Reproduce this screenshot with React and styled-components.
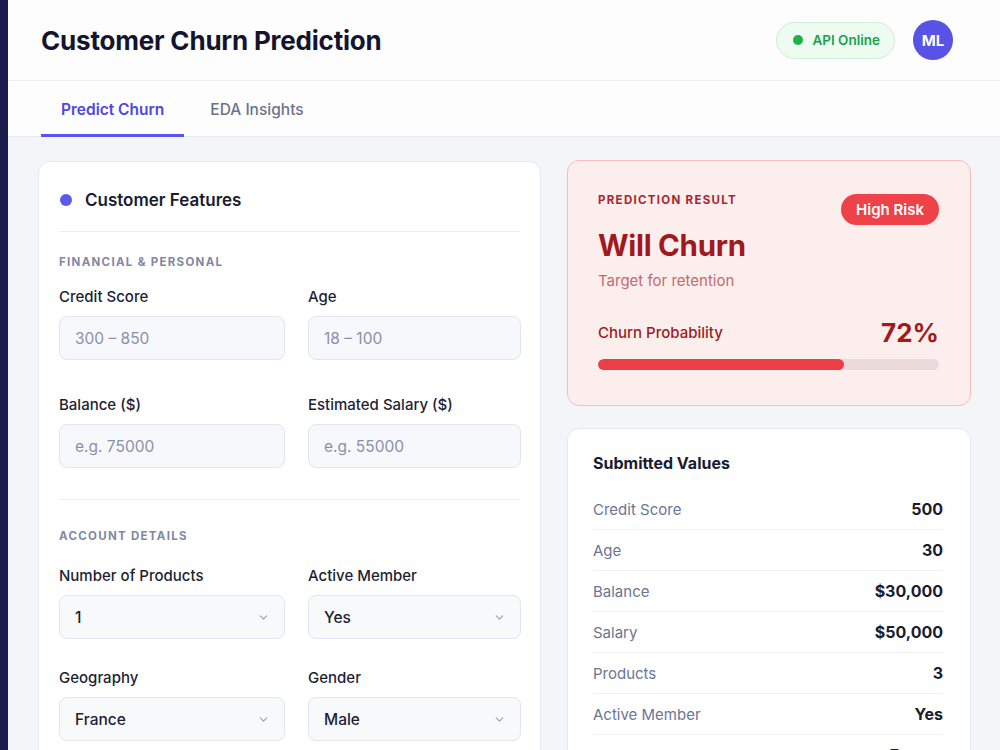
import React from "react"
import styled, { createGlobalStyle } from "styled-components"
import { ChevronDown } from "lucide-react"

const GlobalStyle = createGlobalStyle`
  * { box-sizing: border-box; }
  body {
    margin: 0;
    font-family: Inter, "Noto Sans", "Liberation Sans", sans-serif;
    background: #f4f5f9;
    color: #15172f;
  }
`

const submitted = [
  ["Credit Score", "500"],
  ["Age", "30"],
  ["Balance", "$30,000"],
  ["Salary", "$50,000"],
  ["Products", "3"],
  ["Active Member", "Yes"],
  ["Geography", "France"],
  ["Gender", "Male"],
]

const Field = ({ label, placeholder, value }) => (
  <FieldBox>
    <Label>{label}</Label>
    {value ? (
      <Select>
        <span>{value}</span>
        <ChevronDown size={13} strokeWidth={2} color="#9aa1b5" />
      </Select>
    ) : (
      <Input placeholder={placeholder} />
    )}
  </FieldBox>
)

const App = () => {
  const probability = 72

  return (
    <>
      <GlobalStyle />
      <Shell>
        <Sidebar />
        <Page>
          <Header>
            <Title>Customer Churn Prediction</Title>
            <HeaderRight>
              <StatusPill>
                <StatusDot />
                API Online
              </StatusPill>
              <Avatar>ML</Avatar>
            </HeaderRight>
          </Header>

          <Tabs>
            <Tab active>Predict Churn</Tab>
            <Tab>EDA Insights</Tab>
          </Tabs>

          <Main>
            <Card>
              <CardHeader>
                <HeaderDot />
                Customer Features
              </CardHeader>

              <Section>
                <SectionTitle>Financial &amp; Personal</SectionTitle>
                <FieldGrid rowGap={35}>
                  <Field label="Credit Score" placeholder="300 – 850" />
                  <Field label="Age" placeholder="18 – 100" />
                  <Field label="Balance ($)" placeholder="e.g. 75000" />
                  <Field label="Estimated Salary ($)" placeholder="e.g. 55000" />
                </FieldGrid>
              </Section>

              <Section divided>
                <SectionTitle spaced>Account Details</SectionTitle>
                <FieldGrid rowGap={29}>
                  <Field label="Number of Products" value="1" />
                  <Field label="Active Member" value="Yes" />
                  <Field label="Geography" value="France" />
                  <Field label="Gender" value="Male" />
                </FieldGrid>
              </Section>
            </Card>

            <Side>
              <ResultCard>
                <ResultTop>
                  <div>
                    <Eyebrow>Prediction Result</Eyebrow>
                    <Verdict>Will Churn</Verdict>
                    <Hint>Target for retention</Hint>
                  </div>
                  <RiskPill>High Risk</RiskPill>
                </ResultTop>
                <ProbRow>
                  <span>Churn Probability</span>
                  <ProbValue>{probability}%</ProbValue>
                </ProbRow>
                <Track>
                  <Fill style={{ width: `${probability}%` }} />
                </Track>
              </ResultCard>

              <ValuesCard>
                <ValuesTitle>Submitted Values</ValuesTitle>
                {submitted.map(([k, v]) => (
                  <ValueRow key={k}>
                    <span>{k}</span>
                    <strong>{v}</strong>
                  </ValueRow>
                ))}
              </ValuesCard>
            </Side>
          </Main>
        </Page>
      </Shell>
    </>
  )
}

export default App

const Shell = styled.div`
  display: flex;
  min-height: 100vh;
`

const Sidebar = styled.aside`
  width: 8px;
  flex-shrink: 0;
  background: #1c1b4d;
`

const Page = styled.div`
  flex: 1;
  min-width: 0;
`

const Header = styled.header`
  height: 81px;
  display: flex;
  align-items: center;
  justify-content: space-between;
  padding: 0 47px 0 33px;
  background: #fdfdfe;
  border-bottom: 1px solid #eceef3;
`

const Title = styled.h1`
  margin: 0;
  font-size: 26px;
  font-weight: 700;
  letter-spacing: -0.2px;
  color: #13152f;
`

const HeaderRight = styled.div`
  display: flex;
  align-items: center;
  gap: 18px;
`

const StatusPill = styled.div`
  display: flex;
  align-items: center;
  gap: 9px;
  height: 37px;
  padding: 0 14px 0 16px;
  border-radius: 19px;
  background: #edfbf1;
  border: 1px solid #ccefd8;
  color: #19a24a;
  font-size: 13.5px;
  font-weight: 600;
`

const StatusDot = styled.span`
  width: 10px;
  height: 10px;
  border-radius: 50%;
  background: #1fb04c;
`

const Avatar = styled.div`
  width: 40px;
  height: 40px;
  border-radius: 50%;
  background: #5853e6;
  color: #fff;
  display: flex;
  align-items: center;
  justify-content: center;
  font-size: 15px;
  font-weight: 700;
`

const Tabs = styled.nav`
  display: flex;
  gap: 6px;
  height: 56px;
  padding: 0 33px;
  background: #fdfdfe;
  border-bottom: 1px solid #e8eaf0;
`

const Tab = styled.div`
  display: flex;
  align-items: center;
  padding: 3px 20px 0;
  font-size: 15.5px;
  font-weight: ${(p) => (p.active ? 600 : 500)};
  color: ${(p) => (p.active ? "#4f46e5" : "#6b7389")};
  border-bottom: 3px solid ${(p) => (p.active ? "#5b55ef" : "transparent")};
  margin-bottom: -1px;
`

const Main = styled.main`
  display: grid;
  grid-template-columns: 503px 404px;
  gap: 26px;
  align-items: start;
  padding: 24px 0 40px 30px;
`

const Card = styled.section`
  background: #fff;
  border: 1px solid #e6e8ef;
  border-radius: 12px;
  padding: 0 20px 30px;
`

const CardHeader = styled.div`
  display: flex;
  align-items: center;
  gap: 13px;
  height: 70px;
  padding: 6px 0 0 1px;
  border-bottom: 1px solid #eceef3;
  font-size: 17px;
  font-weight: 600;
  color: #1a1c2e;
`

const HeaderDot = styled.span`
  width: 12px;
  height: 12px;
  border-radius: 50%;
  background: #5d58ea;
`

const Section = styled.div`
  padding: ${(p) => (p.divided ? "28px 0 0" : "22px 0 31px")};
  border-top: ${(p) => (p.divided ? "1px solid #eceef3" : "none")};
`

const SectionTitle = styled.div`
  font-size: 11.5px;
  line-height: 16px;
  font-weight: 700;
  letter-spacing: 1.3px;
  text-transform: uppercase;
  color: #7f88a4;
  margin-bottom: ${(p) => (p.spaced ? 22 : 17)}px;
`

const FieldGrid = styled.div`
  display: grid;
  grid-template-columns: 226px 213px;
  column-gap: 23px;
  row-gap: ${(p) => p.rowGap}px;
`

const FieldBox = styled.div`
  display: flex;
  flex-direction: column;
`

const Label = styled.label`
  font-size: 15px;
  line-height: 20px;
  font-weight: 500;
  color: #1d1f33;
  margin-bottom: 9px;
`

const Input = styled.input`
  height: 44px;
  width: 100%;
  padding: 0 15px;
  border: 1px solid #e2e5ee;
  border-radius: 8px;
  background: #f7f8fb;
  font-family: inherit;
  font-size: 15.5px;
  color: #1d1f33;
  outline: none;

  &::placeholder {
    color: #8991a8;
  }
`

const Select = styled.div`
  height: 44px;
  display: flex;
  align-items: center;
  justify-content: space-between;
  padding: 0 14px 0 15px;
  border: 1px solid #e2e5ee;
  border-radius: 8px;
  background: #f8f9fb;
  font-size: 15.5px;
  font-weight: 500;
  color: #1d1f33;
`

const Side = styled.div`
  display: flex;
  flex-direction: column;
  gap: 22px;
  margin-top: -1px;
`

const ResultCard = styled.section`
  background: #fdeeee;
  border: 1px solid #f8bcbc;
  border-radius: 12px;
  padding: 31px 31px 35px 30px;
`

const ResultTop = styled.div`
  display: flex;
  justify-content: space-between;
  align-items: flex-start;
`

const Eyebrow = styled.div`
  font-size: 11.5px;
  line-height: 16px;
  font-weight: 700;
  letter-spacing: 1.3px;
  text-transform: uppercase;
  color: #a82630;
`

const Verdict = styled.div`
  margin-top: 19px;
  font-size: 29.5px;
  line-height: 36px;
  font-weight: 700;
  letter-spacing: -0.3px;
  color: #a0191c;
`

const Hint = styled.div`
  margin-top: 8px;
  font-size: 15px;
  line-height: 20px;
  color: #c46a6c;
`

const RiskPill = styled.div`
  margin-top: 2px;
  height: 31px;
  display: flex;
  align-items: center;
  padding: 0 15px;
  border-radius: 16px;
  background: #ee4248;
  color: #fff;
  font-size: 15px;
  font-weight: 600;
`

const ProbRow = styled.div`
  margin-top: 25px;
  height: 32px;
  display: flex;
  align-items: center;
  justify-content: space-between;
  font-size: 15px;
  font-weight: 500;
  color: #9b1c22;
`

const ProbValue = styled.span`
  font-size: 26px;
  font-weight: 700;
  color: #a31a1d;
`

const Track = styled.div`
  margin-top: 11px;
  height: 11px;
  border-radius: 6px;
  background: #eadadb;
  overflow: hidden;
`

const Fill = styled.div`
  height: 100%;
  border-radius: 6px;
  background: #ec3f45;
`

const ValuesCard = styled.section`
  background: #fff;
  border: 1px solid #e6e8ef;
  border-radius: 12px;
  padding: 23px 27px 10px 25px;
`

const ValuesTitle = styled.div`
  font-size: 16px;
  line-height: 22px;
  font-weight: 700;
  color: #1a1c2e;
  margin-bottom: 15px;
`

const ValueRow = styled.div`
  height: 41px;
  display: flex;
  align-items: center;
  justify-content: space-between;
  border-bottom: 1px solid #f0f1f5;
  font-size: 15px;
  color: #6b7594;

  strong {
    font-size: 16px;
    font-weight: 700;
    color: #1a1c2e;
  }

  &:last-child {
    border-bottom: none;
  }
`
